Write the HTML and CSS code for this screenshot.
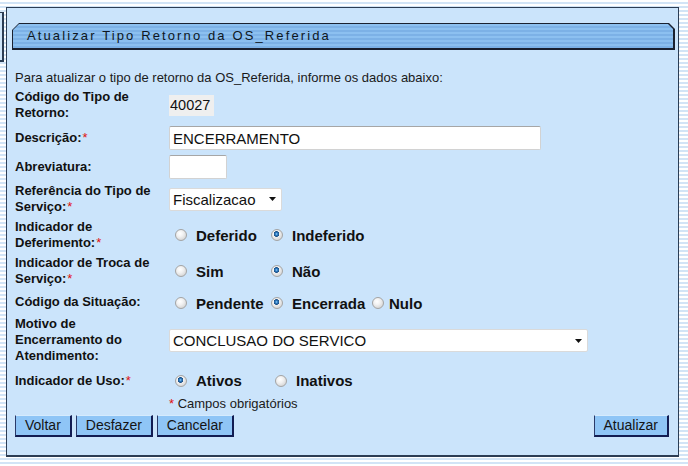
FILE: index.html
```html
<!DOCTYPE html>
<html lang="pt-BR">
<head>
<meta charset="utf-8">
<title>Atualizar Tipo Retorno da OS_Referida</title>
<link rel="stylesheet" href="styles.css">
</head>
<body>
<div class="desk">
  <div class="sidebox"></div>
  <div class="panel">
    <div class="titlebar"><div class="titlebar-in">Atualizar Tipo Retorno da OS_Referida</div></div>
    <div class="form">
      <p class="intro">Para atualizar o tipo de retorno da OS_Referida, informe os dados abaixo:</p>
      <div class="grid">
        <div class="lbl">Código do Tipo de Retorno:</div>
        <div class="val"><input class="ro" type="text" value="40027" readonly></div>

        <div class="lbl">Descrição:<span class="req">*</span></div>
        <div class="val"><input class="txt wide" type="text" value="ENCERRAMENTO"></div>

        <div class="lbl">Abreviatura:</div>
        <div class="val"><input class="txt short" type="text" value=""></div>

        <div class="lbl">Referência do Tipo de Serviço:<span class="req">*</span></div>
        <div class="val"><select class="sel sel-small"><option>Fiscalizacao</option></select></div>

        <div class="lbl">Indicador de Deferimento:<span class="req">*</span></div>
        <div class="val radios">
          <label class="opt c1"><input type="radio" name="def"><span>Deferido</span></label>
          <label class="opt c2"><input type="radio" name="def" checked><span>Indeferido</span></label>
        </div>

        <div class="lbl">Indicador de Troca de Serviço:<span class="req">*</span></div>
        <div class="val radios">
          <label class="opt c1"><input type="radio" name="troca"><span>Sim</span></label>
          <label class="opt c2"><input type="radio" name="troca" checked><span>Não</span></label>
        </div>

        <div class="lbl">Código da Situação:</div>
        <div class="val radios radios-sit">
          <label class="opt c1"><input type="radio" name="sit"><span>Pendente</span></label>
          <label class="opt c2"><input type="radio" name="sit" checked><span>Encerrada</span></label>
          <label class="opt tight"><input type="radio" name="sit"><span>Nulo</span></label>
        </div>

        <div class="lbl lbl-motivo">Motivo de Encerramento do Atendimento:</div>
        <div class="val"><select class="sel sel-big"><option>CONCLUSAO DO SERVICO</option></select></div>

        <div class="lbl">Indicador de Uso:<span class="req">*</span></div>
        <div class="val radios radios-uso">
          <label class="opt c1u"><input type="radio" name="uso" checked><span>Ativos</span></label>
          <label class="opt"><input type="radio" name="uso"><span>Inativos</span></label>
        </div>

        <div class="lbl lbl-empty"></div>
        <div class="note"><span class="req">*</span> Campos obrigatórios</div>
      </div>
      <div class="buttons">
        <div class="btn-left">
          <button class="btn" type="button">Voltar</button>
          <button class="btn" type="button">Desfazer</button>
          <button class="btn" type="button">Cancelar</button>
        </div>
        <button class="btn" type="button">Atualizar</button>
      </div>
    </div>
  </div>
</div>
</body>
</html>
```

FILE: styles.css
```css
html, body {
  margin: 0;
  padding: 0;
}
body {
  width: 688px;
  height: 466px;
  overflow: hidden;
  font-family: "Liberation Sans", Arial, sans-serif;
  font-size: 13px;
  color: #111;
  background: repeating-linear-gradient(to bottom, #ffffff 0 2px, #d2e4f6 2px 4px);
}
.desk {
  display: flex;
  align-items: flex-start;
}
.sidebox {
  width: 2px;
  height: 47px;
  margin-top: 12px;
  background: #cfe5f9;
  border-top: 1px solid #2c3d54;
  border-right: 2px solid #2c3d54;
  border-bottom: 2px solid #2c3d54;
}
.panel {
  box-sizing: border-box;
  width: 673px;
  margin-top: 7px;
  margin-left: 2px;
  background: #cbe4fb;
  border: 1px solid #2c3d54;
  border-bottom-width: 2px;
  padding: 15px 3px 18px 5px;
}
.titlebar {
  height: 27px;
  background: #1a2130;
  padding: 1px 2px 2px 1px;
  box-sizing: border-box;
  clip-path: polygon(7px 0, calc(100% - 6px) 0, 100% 6px, 100% 100%, 0 100%, 0 7px);
}
.titlebar-in {
  height: 100%;
  box-sizing: border-box;
  background: repeating-linear-gradient(to bottom, #8cc0f0 0 2px, #7cb1e6 2px 4px);
  clip-path: polygon(6px 0, calc(100% - 5px) 0, 100% 5px, 100% 100%, 0 100%, 0 6px);
  padding-left: 14px;
  font-size: 13px;
  line-height: 24px;
  letter-spacing: 2.12px;
  color: #0e1622;
}
.form {
  padding: 0 6px 0 3px;
}
.intro {
  margin: 20px 0 1px;
  line-height: 16px;
  color: #1a1a1a;
}
.grid {
  display: grid;
  grid-template-columns: 154px 1fr;
  align-items: center;
}
.lbl {
  font-weight: bold;
  line-height: 16px;
  padding: 2px 6px 2px 0;
  color: #111;
}
.lbl .req {
  margin-left: 1px;
}
.lbl-motivo {
  padding-top: 1px;
  padding-bottom: 2px;
}
.lbl-empty {
  padding: 0;
}
.val {
  padding: 2px 0;
  display: flex;
  align-items: center;
}
.req {
  color: #e01010;
  font-weight: normal;
}
.ro {
  box-sizing: border-box;
  width: 45px;
  height: 21px;
  border: 0;
  padding: 0 1px;
  margin: 0;
  background: #efefef;
  font-family: "Liberation Sans", Arial, sans-serif;
  font-size: 14.5px;
  color: #111;
  outline: none;
}
.txt {
  box-sizing: border-box;
  height: 24px;
  margin: 1px 0 0;
  padding: 0 3px;
  border: 1px solid #d2d2d2;
  border-top-color: #a6a6a6;
  border-radius: 2px;
  background: #fff;
  font-family: "Liberation Sans", Arial, sans-serif;
  font-size: 15px;
  color: #111;
}
.wide {
  width: 372px;
}
.short {
  width: 58px;
}
.sel {
  -webkit-appearance: none;
  appearance: none;
  box-sizing: border-box;
  height: 23px;
  margin: 0;
  padding: 0 3px;
  border: 1px solid #dadada;
  border-radius: 2px;
  background-color: #fff;
  background-image: url("data:image/svg+xml,%3Csvg xmlns='http://www.w3.org/2000/svg' width='7' height='4'%3E%3Cpath d='M0 0h7L3.5 4z' fill='%23111'/%3E%3C/svg%3E");
  background-repeat: no-repeat;
  background-position: right 5px center;
  font-family: "Liberation Sans", Arial, sans-serif;
  font-size: 15px;
  color: #111;
}
.sel-small {
  width: 113px;
}
.sel-big {
  width: 419px;
}
.radios {
  min-height: 22px;
}
.radios-sit {
  padding-top: 3px;
  padding-bottom: 1px;
}
.radios-uso {
  min-height: 25px;
}
.opt {
  display: flex;
  align-items: center;
  font-weight: bold;
  font-size: 15px;
  color: #111;
}
.c1 {
  width: 96px;
}
.c2 {
  width: 101px;
}
.c1u {
  width: 100px;
}
.opt input {
  -webkit-appearance: none;
  appearance: none;
  width: 12px;
  height: 12px;
  margin: 0 9px 0 6px;
  border: 1px solid #a4a4a4;
  border-radius: 50%;
  box-sizing: border-box;
  background: radial-gradient(circle at 40% 35%, #ffffff 0, #f2f2f2 35%, #c9c9c9 100%);
}
.opt input:checked {
  background:
    radial-gradient(circle at 45% 40%, #9fd3ff 0, #2f7fc4 1.2px, #1c4f86 2.6px, rgba(0,0,0,0) 3px),
    radial-gradient(circle at 40% 35%, #ffffff 0, #f2f2f2 35%, #c9c9c9 100%);
}
.tight input {
  margin-right: 5px;
}
.note {
  padding: 0;
  margin-top: 1px;
  line-height: 16px;
  color: #1a1a1a;
}
.buttons {
  display: flex;
  justify-content: space-between;
  margin-top: 3px;
}
.btn-left {
  display: flex;
  gap: 4px;
}
.btn {
  box-sizing: border-box;
  height: 22px;
  margin: 0;
  padding: 0 9px;
  background: #8fc5f6;
  border-style: solid;
  border-width: 1px 2px 2px 1px;
  border-color: #d6ebfd #121c52 #121c52 #2a3a6a;
  font-family: "Liberation Sans", Arial, sans-serif;
  font-size: 14px;
  line-height: 19px;
  color: #141414;
}
```
